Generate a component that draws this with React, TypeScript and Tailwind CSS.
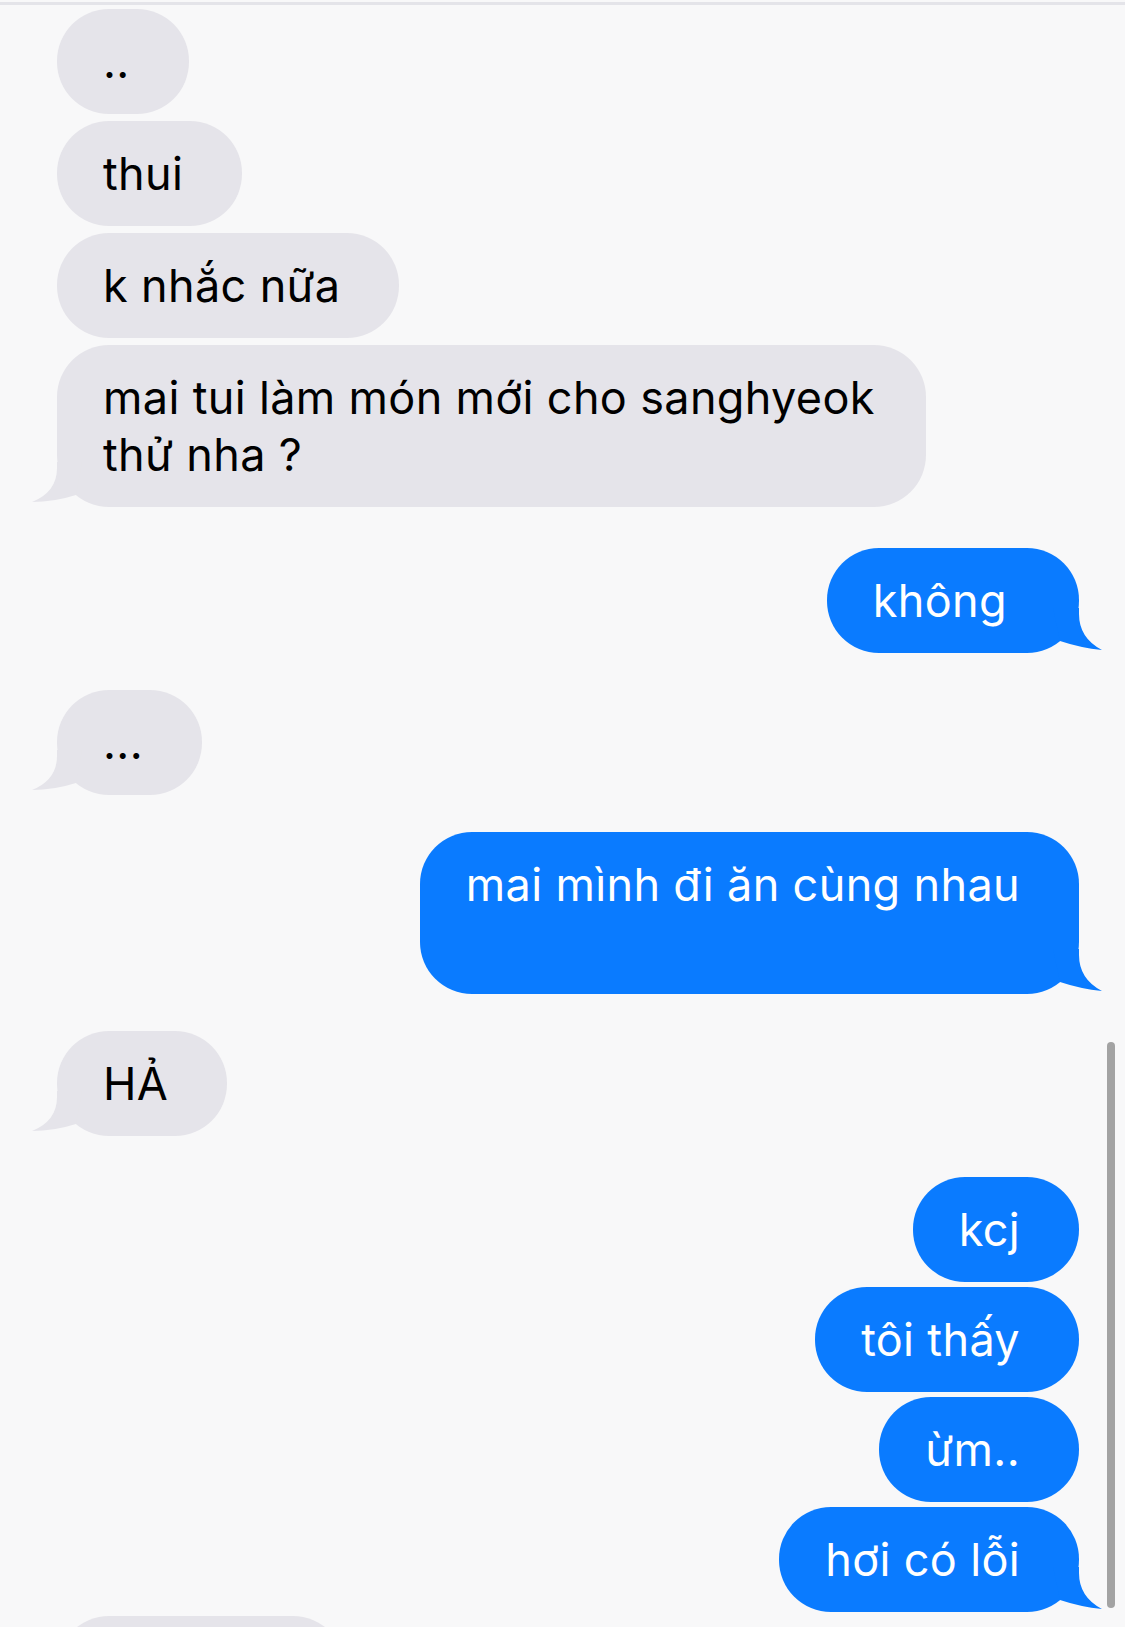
const font = { fontFamily: '"Inter", "Noto Sans", sans-serif' };

type Msg = {
  text: string;
  from: "me" | "them";
  tail?: boolean;
  lines?: number;
  w?: string;
  mt: string;
};

const messages: Msg[] = [
  { text: "..", from: "them", mt: "mt-[4px]" },
  { text: "thui", from: "them", mt: "mt-[7px]" },
  { text: "k nhắc nữa", from: "them", mt: "mt-[7px]" },
  { text: "mai tui làm món mới cho sanghyeok\nthử nha ?", from: "them", tail: true, w: "w-[869px]", mt: "mt-[7px]" },
  { text: "không\u00a0", from: "me", tail: true, mt: "mt-[41px]" },
  { text: "...", from: "them", tail: true, mt: "mt-[37px]" },
  { text: "mai mình đi ăn cùng nhau", from: "me", tail: true, lines: 2, mt: "mt-[37px]" },
  { text: "HẢ", from: "them", tail: true, mt: "mt-[37px]" },
  { text: "kcj", from: "me", mt: "mt-[41px]" },
  { text: "tôi thấy", from: "me", mt: "mt-[5px]" },
  { text: "ừm..", from: "me", mt: "mt-[5px]" },
  { text: "hơi có lỗi", from: "me", tail: true, mt: "mt-[5px]" },
  { text: "", from: "them", w: "w-[288px] h-[105px]", mt: "mt-[4px]" },
];

function Tail({ from }: { from: "me" | "them" }) {
  if (from === "me") {
    return (
      <svg className="absolute bottom-0 right-[-24px]" width="50" height="45" viewBox="0 0 50 45">
        <path d="M26,0 L26,6 Q26,30 49,42 Q28,40 7,33 L0,0 Z" fill="#0a7bff" />
      </svg>
    );
  }
  return (
    <svg className="absolute bottom-0 left-[-25px]" width="50" height="45" viewBox="0 0 50 45">
      <path d="M25,0 L25,6 Q25,30 0,40 Q22,40 44,33 L50,0 Z" fill="#e5e4ea" />
    </svg>
  );
}

function Bubble({ msg }: { msg: Msg }) {
  const mine = msg.from === "me";
  return (
    <div className={`${msg.mt} flex ${mine ? "justify-end" : "justify-start"}`}>
      <div
        className={`relative shrink-0 rounded-[52px] pl-[46px] pr-[59px] py-[24px] text-[45px] leading-[57px] tracking-[0.35px] ${
          mine ? "bg-[#0a7bff] text-white" : "bg-[#e5e4ea] text-black"
        } ${msg.w ?? ""}`}
      >
        {msg.tail && <Tail from={msg.from} />}
        <span className="relative whitespace-pre">{msg.text}</span>
        {msg.lines === 2 && <div className="h-[57px]" />}
      </div>
    </div>
  );
}

export default function App() {
  return (
    <div className="relative h-[1627px] w-[1125px] overflow-hidden bg-[#f8f8f9]" style={font}>
      <div className="mt-[2px] h-[3px] bg-[#e4e4e9]" />
      <div className="flex flex-col pl-[57px] pr-[46px]">
        {messages.map((m, i) => (
          <Bubble key={i} msg={m} />
        ))}
      </div>
      <div className="absolute left-[1107px] top-[1042px] h-[566px] w-[8px] rounded-full bg-[#a3a3a3]" />
    </div>
  );
}
